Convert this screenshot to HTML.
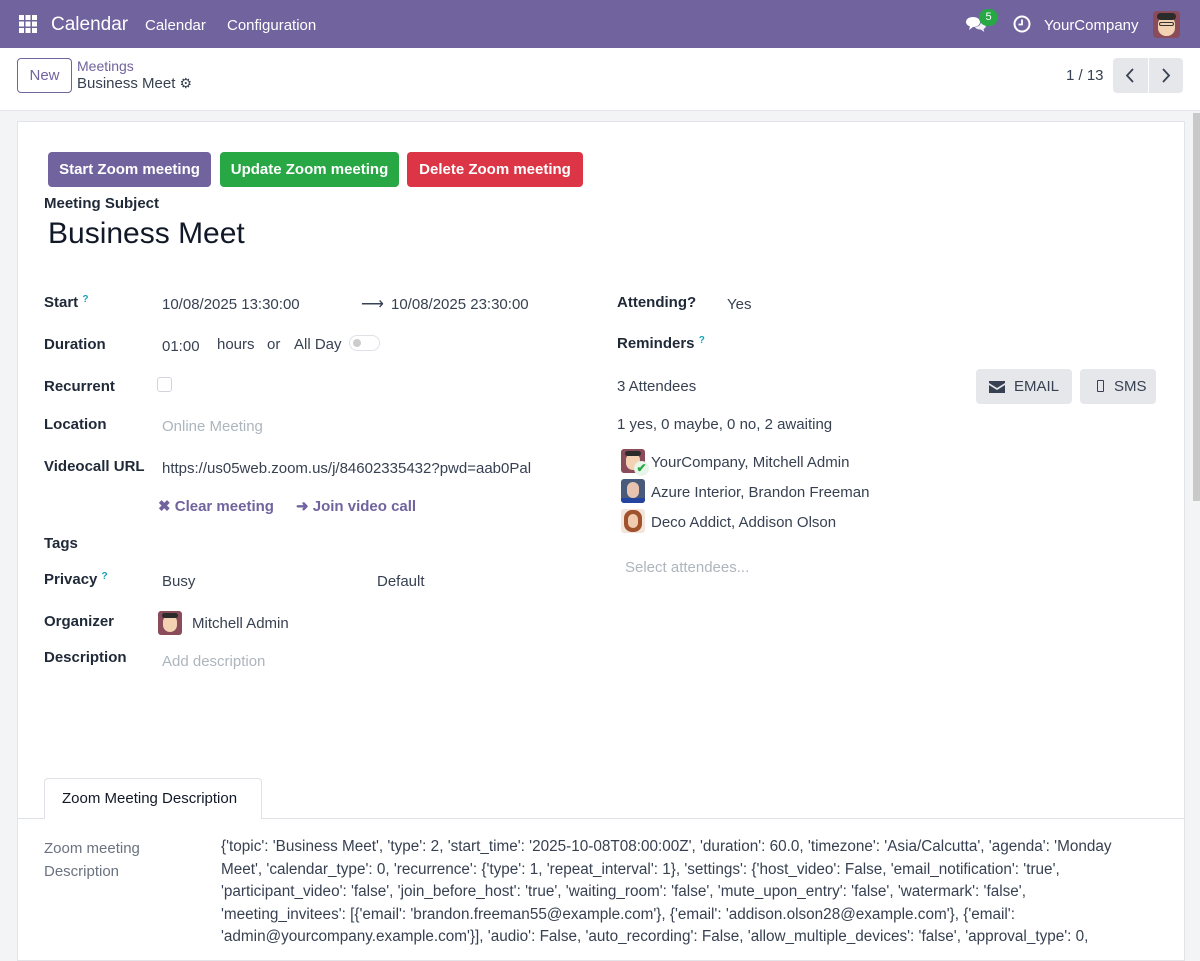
<!DOCTYPE html>
<html><head><meta charset="utf-8"><style>
*{box-sizing:border-box;margin:0;padding:0}
body{width:1200px;height:943px;overflow:hidden;background:#f3f4f6;font-family:"Liberation Sans",sans-serif;font-size:15px;color:#374151;position:relative}
.a{position:absolute;white-space:nowrap}
.nav{position:absolute;left:0;top:0;width:1200px;height:48px;background:#71639e;color:#fff}
.cp{position:absolute;left:0;top:48px;width:1200px;height:63px;background:#fff;border-bottom:1px solid #e5e7eb}
.card{position:absolute;left:17px;top:121px;width:1168px;height:840px;background:#fff;border:1px solid #e2e4e8}
.btn{position:absolute;top:152px;height:35px;border-radius:4px;color:#fff;font-weight:bold;font-size:15px;line-height:35px;text-align:center}
.lbl{font-weight:bold;color:#1f2937}
.q{color:#17a2b8;font-size:10px;vertical-align:top;font-weight:bold}
.ph{color:#adb5bd}
.av{position:absolute;width:24px;height:24px;border-radius:3px;overflow:hidden}
.gb{position:absolute;top:369px;height:35px;background:#e5e7eb;border-radius:4px;line-height:35px;color:#374151;font-size:15px}
</style></head><body>
<div class="nav">
 <svg class="a" style="left:19px;top:15px" width="18" height="18" viewBox="0 0 18 18" fill="#fff"><rect x="0" y="0" width="5" height="5"/><rect x="6.5" y="0" width="5" height="5"/><rect x="13" y="0" width="5" height="5"/><rect x="0" y="6.5" width="5" height="5"/><rect x="6.5" y="6.5" width="5" height="5"/><rect x="13" y="6.5" width="5" height="5"/><rect x="0" y="13" width="5" height="5"/><rect x="6.5" y="13" width="5" height="5"/><rect x="13" y="13" width="5" height="5"/></svg>
 <div class="a" style="left:51px;top:14px;font-size:19px">Calendar</div>
 <div class="a" style="left:145px;top:17px;font-size:15px">Calendar</div>
 <div class="a" style="left:227px;top:17px;font-size:15px">Configuration</div>
 <svg class="a" style="left:965px;top:15px" width="22" height="18" viewBox="0 0 22 18" fill="#fff"><path d="M1 7c0-3 3-5 7-5s7 2 7 5-3 5-7 5l-4 3 1-3.5C2.5 10.5 1 9 1 7z"/><path d="M16 6c3 .5 5 2.5 5 4.5 0 1.5-1 2.8-2.5 3.5l.8 3-3.5-2.5c-3 0-5-1-6-2.5 4 0 6.5-2.5 6.2-6z" opacity=".9"/></svg>
 <div class="a" style="left:979px;top:9px;width:19px;height:17px;border-radius:9px;background:#28a745;color:#fff;font-size:11px;text-align:center;line-height:17px">5</div>
 <svg class="a" style="left:1013px;top:15px" width="18" height="18" viewBox="0 0 18 18"><circle cx="9" cy="9" r="7.5" fill="none" stroke="#fff" stroke-width="2"/><path d="M9 4.5V9.5H5.5" fill="none" stroke="#fff" stroke-width="1.8"/></svg>
 <div class="a" style="left:1044px;top:17px;font-size:15px">YourCompany</div>
 <div class="a" style="left:1153px;top:11px;width:27px;height:27px;border-radius:4px;background:#8a4b5a;overflow:hidden"><div style="position:absolute;left:5px;top:5px;width:17px;height:20px;border-radius:8px;background:#f3d2b3"></div><div style="position:absolute;left:4px;top:2px;width:19px;height:7px;border-radius:4px;background:#2b2b2b"></div><div style="position:absolute;left:6px;top:11px;width:15px;height:4px;border:1.5px solid #333;border-radius:2px"></div></div>
</div>
<div class="cp">
 <div class="a" style="left:17px;top:10px;width:55px;height:35px;border:1px solid #71639e;border-radius:4px;color:#71639e;text-align:center;line-height:33px;font-size:15px">New</div>
 <div class="a" style="left:77px;top:10px;color:#71639e;font-size:14px">Meetings</div>
 <div class="a" style="left:77px;top:27px;font-size:15px;color:#374151">Business Meet <span style="font-size:14px;color:#374151">⚙</span></div>
 <div class="a" style="left:1066px;top:19px;font-size:15px">1 / 13</div>
 <div class="a" style="left:1113px;top:10px;width:35px;height:35px;background:#e5e7eb;border-radius:4px 0 0 4px"></div>
 <div class="a" style="left:1149px;top:10px;width:34px;height:35px;background:#e5e7eb;border-radius:0 4px 4px 0"></div>
 <svg class="a" style="left:1124px;top:19px" width="12" height="17" viewBox="0 0 12 17"><path d="M9 2L3 8.5 9 15" fill="none" stroke="#374151" stroke-width="1.8"/></svg>
 <svg class="a" style="left:1160px;top:19px" width="12" height="17" viewBox="0 0 12 17"><path d="M3 2l6 6.5L3 15" fill="none" stroke="#374151" stroke-width="1.8"/></svg>
</div>
<div class="a" style="left:1193px;top:113px;width:7px;height:388px;background:#c9c9c9"></div>
<div class="card"></div>
<div class="btn" style="left:48px;width:163px;background:#71639e">Start Zoom meeting</div>
<div class="btn" style="left:220px;width:179px;background:#28a745">Update Zoom meeting</div>
<div class="btn" style="left:407px;width:176px;background:#dc3545">Delete Zoom meeting</div>
<div class="a lbl" style="left:44px;top:195px;font-size:15px">Meeting Subject</div>
<div class="a" style="left:48px;top:217px;font-size:30px;color:#111827">Business Meet</div>

<div class="a lbl" style="left:44px;top:294px">Start <span class="q">?</span></div>
<div class="a" style="left:162px;top:296px">10/08/2025 13:30:00</div>
<div class="a" style="left:361px;top:294px;font-size:16px;color:#374151">⟶</div>
<div class="a" style="left:391px;top:296px">10/08/2025 23:30:00</div>
<div class="a lbl" style="left:44px;top:336px">Duration</div>
<div class="a" style="left:162px;top:338px">01:00</div>
<div class="a" style="left:217px;top:336px">hours</div>
<div class="a" style="left:267px;top:336px">or</div>
<div class="a" style="left:294px;top:336px">All Day</div>
<div class="a" style="left:349px;top:335px;width:31px;height:16px;border:1px solid #dee2e6;border-radius:8px"><div style="position:absolute;left:3px;top:3px;width:8px;height:8px;border-radius:50%;background:#ccc"></div></div>
<div class="a lbl" style="left:44px;top:378px">Recurrent</div>
<div class="a" style="left:157px;top:377px;width:15px;height:15px;border:1px solid #d1d5db;border-radius:3px"></div>
<div class="a lbl" style="left:44px;top:416px">Location</div>
<div class="a ph" style="left:162px;top:418px">Online Meeting</div>
<div class="a lbl" style="left:44px;top:458px">Videocall URL</div>
<div class="a" style="left:162px;top:460px">https://us05web.zoom.us/j/84602335432?pwd=aab0Pal</div>
<div class="a" style="left:158px;top:497px;color:#71639e;font-weight:bold">✖ Clear meeting</div>
<div class="a" style="left:296px;top:497px;color:#71639e;font-weight:bold">➜ Join video call</div>
<div class="a lbl" style="left:44px;top:535px">Tags</div>
<div class="a lbl" style="left:44px;top:571px">Privacy <span class="q">?</span></div>
<div class="a" style="left:162px;top:573px">Busy</div>
<div class="a" style="left:377px;top:573px">Default</div>
<div class="a lbl" style="left:44px;top:613px">Organizer</div>
<div class="av" style="left:158px;top:611px;background:#8a4b5a"><div style="position:absolute;left:5px;top:4px;width:14px;height:17px;border-radius:7px;background:#f3d2b3"></div><div style="position:absolute;left:4px;top:2px;width:16px;height:5px;border-radius:3px;background:#2b2b2b"></div></div>
<div class="a" style="left:192px;top:615px">Mitchell Admin</div>
<div class="a lbl" style="left:44px;top:649px">Description</div>
<div class="a ph" style="left:162px;top:653px">Add description</div>

<div class="a lbl" style="left:617px;top:294px">Attending?</div>
<div class="a" style="left:727px;top:296px">Yes</div>
<div class="a lbl" style="left:617px;top:335px">Reminders <span class="q">?</span></div>
<div class="a" style="left:617px;top:378px">3 Attendees</div>
<div class="gb" style="left:976px;width:96px"><svg style="position:absolute;left:13px;top:12px" width="16" height="12" viewBox="0 0 16 12"><path d="M0 0h16v2L8 7 0 2z M0 4l8 5 8-5v8H0z" fill="#374151"/></svg><span style="position:absolute;left:38px">EMAIL</span></div>
<div class="gb" style="left:1080px;width:76px"><div style="position:absolute;left:17px;top:11px;width:7px;height:12px;border:1.5px solid #374151;border-radius:1px"></div><span style="position:absolute;left:34px">SMS</span></div>
<div class="a" style="left:617px;top:416px">1 yes, 0 maybe, 0 no, 2 awaiting</div>
<div class="av" style="left:621px;top:449px;background:#8a4b5a"><div style="position:absolute;left:5px;top:4px;width:14px;height:17px;border-radius:7px;background:#f3d2b3"></div><div style="position:absolute;left:4px;top:2px;width:16px;height:5px;border-radius:3px;background:#2b2b2b"></div></div>
<div class="a" style="left:634px;top:461px;width:15px;height:15px;border-radius:50%;background:#e8f5e9;color:#28a745;font-size:12px;line-height:15px;text-align:center;font-weight:bold">✔</div>
<div class="a" style="left:651px;top:454px">YourCompany, Mitchell Admin</div>
<div class="av" style="left:621px;top:479px;background:#4a5a7a"><div style="position:absolute;left:6px;top:3px;width:12px;height:16px;border-radius:6px;background:#e8c4b0"></div><div style="position:absolute;left:0;top:19px;width:24px;height:5px;background:#2444a0"></div></div>
<div class="a" style="left:651px;top:484px">Azure Interior, Brandon Freeman</div>
<div class="av" style="left:621px;top:509px;background:#f3e5dc"><div style="position:absolute;left:3px;top:1px;width:18px;height:22px;border-radius:8px;background:#a0522d"></div><div style="position:absolute;left:7px;top:5px;width:10px;height:14px;border-radius:5px;background:#f1cbb0"></div></div>
<div class="a" style="left:651px;top:514px">Deco Addict, Addison Olson</div>
<div class="a ph" style="left:625px;top:559px">Select attendees...</div>

<div class="a" style="left:18px;top:818px;width:1166px;height:1px;background:#dee2e6"></div>
<div class="a" style="left:44px;top:778px;width:218px;height:41px;background:#fff;border:1px solid #dee2e6;border-bottom:none;border-radius:4px 4px 0 0;color:#111827;line-height:40px;padding-left:17px">Zoom Meeting Description</div>
<div class="a" style="left:44px;top:837px;color:#6b7280;line-height:23px;width:140px">Zoom meeting<br>Description</div>
<div class="a" style="left:221px;top:836px;line-height:22.6px;color:#374151;font-size:15.3px">{'topic': 'Business Meet', 'type': 2, 'start_time': '2025-10-08T08:00:00Z', 'duration': 60.0, 'timezone': 'Asia/Calcutta', 'agenda': 'Monday<br>Meet', 'calendar_type': 0, 'recurrence': {'type': 1, 'repeat_interval': 1}, 'settings': {'host_video': False, 'email_notification': 'true',<br>'participant_video': 'false', 'join_before_host': 'true', 'waiting_room': 'false', 'mute_upon_entry': 'false', 'watermark': 'false',<br>'meeting_invitees': [{'email': 'brandon.freeman55@example.com'}, {'email': 'addison.olson28@example.com'}, {'email':<br>'admin@yourcompany.example.com'}], 'audio': False, 'auto_recording': False, 'allow_multiple_devices': 'false', 'approval_type': 0,</div>
</body></html>
